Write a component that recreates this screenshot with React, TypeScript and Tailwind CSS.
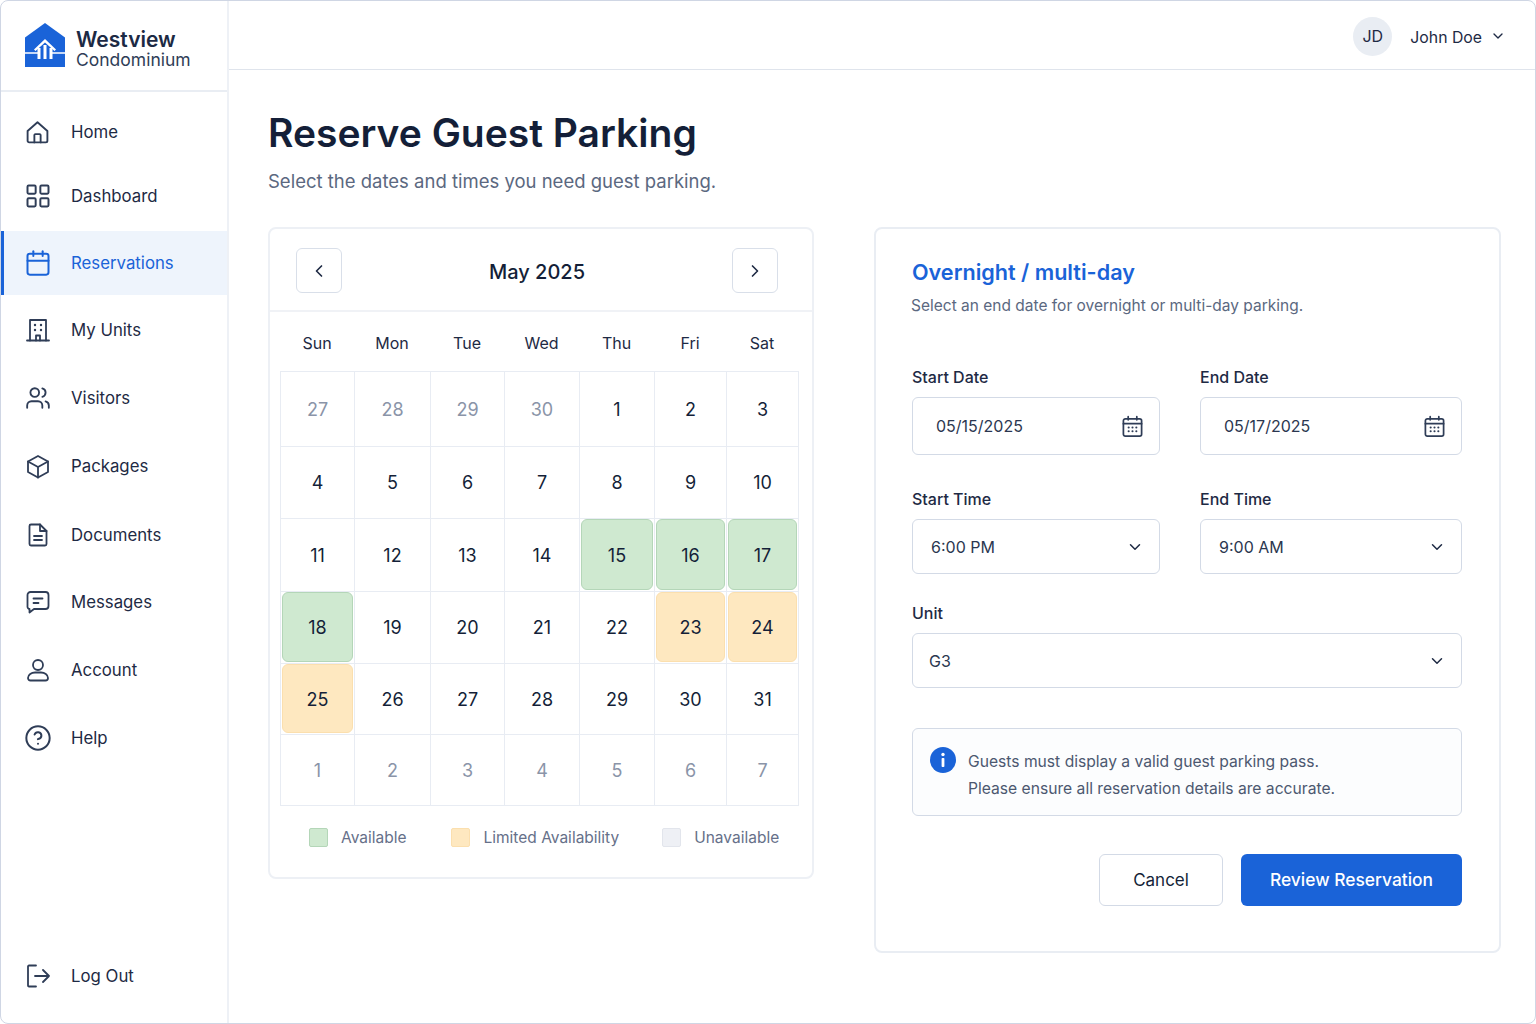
import React from 'react';
import { Calendar, ChevronDown, ChevronLeft, ChevronRight, CircleHelp, LayoutGrid, Users } from 'lucide-react';

type IconProps = { className?: string };

const Line = ({ className, children }: IconProps & { children: React.ReactNode }) => (
    <svg viewBox="0 0 24 24" fill="none" stroke="currentColor" strokeWidth={1.8} strokeLinecap="round" strokeLinejoin="round" className={className}>
        {children}
    </svg>
);

const HomeIcon = ({ className }: IconProps) => (
    <Line className={className}>
        <path d="M2.5 10.5 12 2.2l9.500 8.300V20a1.500 1.500 0 0 1-1.500 1.500H4A1.500 1.500 0 0 1 2.500 20z" />
        <path d="M9 21.500V14.500a1 1 0 0 1 1-1h4a1 1 0 0 1 1 1v7" />
    </Line>
);

const BuildingIcon = ({ className }: IconProps) => (
    <Line className={className}>
        <path d="M1 22.500h22" />
        <path d="M4 22.500V2h16v20.500" />
        <path d="M10 22.500v-5h4v5" />
        <path d="M9 7h.01M15 7h.01M9 12h.01M15 12h.01" strokeWidth={2.4} />
    </Line>
);

const PackageIcon = ({ className }: IconProps) => (
    <Line className={className}>
        <path d="M12 1.500 22 7v10.500L12 23 2 17.500V7z" />
        <path d="M2 7l10 5.500L22 7M12 12.500V23" />
    </Line>
);

const DocIcon = ({ className }: IconProps) => (
    <Line className={className}>
        <path d="M14 1.500H5a1.500 1.500 0 0 0-1.500 1.500v18A1.500 1.500 0 0 0 5 22.500h14a1.500 1.500 0 0 0 1.500-1.500V8z" />
        <path d="M14 1.500V8h6.500" />
        <path d="M8 13h8M8 17h8" />
    </Line>
);

const MessageIcon = ({ className }: IconProps) => (
    <Line className={className}>
        <path d="M4.500 2h15a3 3 0 0 1 3 3v11a3 3 0 0 1-3 3H8l-4.500 3.500V19A2.500 2.500 0 0 1 1.500 16V5a3 3 0 0 1 3-3z" />
        <path d="M7.500 8.500h9M7.500 13h5" />
    </Line>
);

const UserIcon = ({ className }: IconProps) => (
    <Line className={className}>
        <circle cx="12" cy="7" r="5" />
        <path d="M2 20c0-3.500 3.500-5.500 7-5.500h6c3.500 0 7 2 7 5.500 0 1.500-1 2.500-2.500 2.500h-15C3 22.500 2 21.500 2 20z" />
    </Line>
);

const LogOutIcon = ({ className }: IconProps) => (
    <Line className={className}>
        <path d="M10 1.500H3a1 1 0 0 0-1 1v19a1 1 0 0 0 1 1h7" />
        <path d="M9 12h14M17 6l6 6-6 6" />
    </Line>
);

const DateIcon = ({ className }: IconProps) => (
    <Line className={className}>
        <rect x="2.500" y="4" width="19" height="18" rx="2" />
        <path d="M2.500 9h19M7.500 1.800V5M16.500 1.800V5" />
        <path d="M8 13h.01M12 13h.01M16 13h.01M8 17h.01M12 17h.01M16 17h.01" strokeWidth={2.2} />
    </Line>
);

const Logo = () => (
    <svg viewBox="0 0 40 44" className="w-10 h-11 shrink-0 -mt-[2px]">
        <path d="M20 0 40 14.500V44H0V14.500z" fill="#1a63d8" />
        <path d="M0 30h13M27 30h13" stroke="#fff" strokeWidth={1.4} fill="none" />
        <path d="M20 16 31 26.500 29.500 28 20 19.500 10.500 28 9 26.500z" fill="#fff" />
        <rect x="12.500" y="25" width="3" height="11" fill="#fff" />
        <rect x="24.500" y="25" width="3" height="11" fill="#fff" />
        <rect x="18.500" y="22" width="3" height="14" fill="#fff" />
    </svg>
);

const navItems = [
    { label: 'Home', Icon: HomeIcon, iconClass: 'w-[25px] h-[25px]', space: 'mt-0' },
    { label: 'Dashboard', Icon: LayoutGrid, iconClass: 'w-[28px] h-[28px]', space: 'mt-0' },
    { label: 'Reservations', Icon: Calendar, iconClass: 'w-[28px] h-[28px]', space: 'mt-[3px]', active: true },
    { label: 'My Units', Icon: BuildingIcon, iconClass: 'w-[24px] h-[24px]', space: 'mt-[3px]' },
    { label: 'Visitors', Icon: Users, iconClass: 'w-[26px] h-[26px]', space: 'mt-[4px]' },
    { label: 'Packages', Icon: PackageIcon, iconClass: 'w-[24px] h-[25px]', space: 'mt-[4px]' },
    { label: 'Documents', Icon: DocIcon, iconClass: 'w-[24px] h-[24px]', space: 'mt-[5px]' },
    { label: 'Messages', Icon: MessageIcon, iconClass: 'w-[24px] h-[24px]', space: 'mt-[3px]' },
    { label: 'Account', Icon: UserIcon, iconClass: 'w-[24px] h-[24px]', space: 'mt-[4px]' },
    { label: 'Help', Icon: CircleHelp, iconClass: 'w-[28px] h-[28px]', space: 'mt-[4px]' },
];

function NavRow({ label, Icon, iconClass, space, active }: { label: string; Icon: React.ComponentType<any>; iconClass: string; space: string; active?: boolean }) {
    return (
        <div className={`${space} h-16 shrink-0 flex items-center ${active ? 'bg-[#eef4fc] border-l-[3px] border-[#1a63d8] text-[#1a63d8]' : 'pl-[3px] text-[#1e2a44]'}`}>
            <div className={`w-[67px] flex items-center justify-center ${active ? 'text-[#1a63d8]' : 'text-[#2f3d57]'}`}>
                <Icon className={`${iconClass} shrink-0`} strokeWidth={1.7} />
            </div>
            <span className="pt-[2px] text-[16.800px]">{label}</span>
        </div>
    );
}

function Sidebar() {
    return (
        <aside className="w-[228px] shrink-0 flex flex-col border-r-2 border-[#eef1f6]">
            <div className="h-[91px] shrink-0 border-b-2 border-[#e9edf3] flex items-center pl-6 gap-[11px]">
                <Logo />
                <div className="flex flex-col pt-[7px]">
                    <span className="text-[21px] leading-[22px] font-semibold text-[#1c2a44]">Westview</span>
                    <span className="text-[17.500px] leading-[18px] text-[#2f3d57]">Condominium</span>
                </div>
            </div>
            <nav className="flex-1 flex flex-col pt-2">
                {navItems.map((item) => (
                    <NavRow key={item.label} {...item} />
                ))}
                <div className="mt-auto mb-[15px]">
                    <NavRow label="Log Out" Icon={LogOutIcon} iconClass="w-[24px] h-[24px]" space="mt-0" />
                </div>
            </nav>
        </aside>
    );
}

const colWidths = 'grid-cols-[74px_76px_74px_75px_75px_72px_72px]';
const rowHeights = 'grid-rows-[75px_72px_73px_72px_71px_71px]';

type Day = { n: number; muted?: boolean; tone?: 'green' | 'amber' };

const days: Day[] = [
    { n: 27, muted: true }, { n: 28, muted: true }, { n: 29, muted: true }, { n: 30, muted: true }, { n: 1 }, { n: 2 }, { n: 3 },
    { n: 4 }, { n: 5 }, { n: 6 }, { n: 7 }, { n: 8 }, { n: 9 }, { n: 10 },
    { n: 11 }, { n: 12 }, { n: 13 }, { n: 14 }, { n: 15, tone: 'green' }, { n: 16, tone: 'green' }, { n: 17, tone: 'green' },
    { n: 18, tone: 'green' }, { n: 19 }, { n: 20 }, { n: 21 }, { n: 22 }, { n: 23, tone: 'amber' }, { n: 24, tone: 'amber' },
    { n: 25, tone: 'amber' }, { n: 26 }, { n: 27 }, { n: 28 }, { n: 29 }, { n: 30 }, { n: 31 },
    { n: 1, muted: true }, { n: 2, muted: true }, { n: 3, muted: true }, { n: 4, muted: true }, { n: 5, muted: true }, { n: 6, muted: true }, { n: 7, muted: true },
];

function DayCell({ day }: { day: Day }) {
    return (
        <div className="border-r border-b border-[#e8ecf3] flex items-center justify-center relative">
            {day.tone && (
                <div className={`absolute left-px top-0 right-px bottom-px rounded-[6px] border ${day.tone === 'green' ? 'bg-[#cfe9d0] border-[#b4d6b8]' : 'bg-[#fee8c0] border-[#fbdfae]'}`} />
            )}
            <span className={`relative text-[18px] ${day.muted ? 'text-[#8a94a8]' : 'text-[#141f38]'}`}>{day.n}</span>
        </div>
    );
}

function CalendarCard() {
    return (
        <section className="w-[546px] h-[652px] shrink-0 border-2 border-[#edf0f5] rounded-lg flex flex-col">
            <div className="h-[83px] shrink-0 pt-[2px] border-b-2 border-[#f0f2f6] flex items-center justify-between pl-[26px] pr-[34px]">
                <button className="w-[46px] h-[45px] border border-[#d9dfe9] rounded-md flex items-center justify-center text-[#1e2a44]">
                    <ChevronLeft className="w-5 h-5" strokeWidth={2} />
                </button>
                <span className="pt-[3px] text-[20px] font-medium text-[#141f38]">May 2025</span>
                <button className="w-[46px] h-[45px] border border-[#d9dfe9] rounded-md flex items-center justify-center text-[#1e2a44]">
                    <ChevronRight className="w-5 h-5" strokeWidth={2} />
                </button>
            </div>
            <div className={`ml-[10px] grid ${colWidths} h-[59px] pt-[2px] items-center text-center text-[16px] text-[#1e2a44]`}>
                {['Sun', 'Mon', 'Tue', 'Wed', 'Thu', 'Fri', 'Sat'].map((d) => (
                    <span key={d}>{d}</span>
                ))}
            </div>
            <div className={`ml-[10px] w-[519px] h-[435px] grid ${colWidths} ${rowHeights} border-t border-l border-[#e8ecf3]`}>
                {days.map((day, i) => (
                    <DayCell key={i} day={day} />
                ))}
            </div>
            <div className="flex items-center mt-[20px] pl-[39px] text-[15.500px] text-[#667089]">
                <span className="w-[19px] h-[19px] rounded-[2px] bg-[#cfe9d0] border border-[#b4d6b8]" />
                <span className="ml-[13px]">Available</span>
                <span className="ml-[45px] w-[19px] h-[19px] rounded-[2px] bg-[#fee8c0] border border-[#fbdfae]" />
                <span className="ml-[13px]">Limited Availability</span>
                <span className="ml-[43px] w-[19px] h-[19px] rounded-[2px] bg-[#eef0f5] border border-[#e2e5ec]" />
                <span className="ml-[13px]">Unavailable</span>
            </div>
        </section>
    );
}

function Field({ label, value, height, padding, icon }: { label: string; value: string; height: string; padding: string; icon: React.ReactNode }) {
    return (
        <div className="flex flex-col">
            <span className="mb-[10px] text-[16px] leading-5 font-medium text-[#1e2a44]">{label}</span>
            <div className={`${height} ${padding} border border-[#d3dae6] rounded-md flex items-center justify-between text-[16px] text-[#2b3750]`}>
                <span>{value}</span>
                {icon}
            </div>
        </div>
    );
}

function ReservationCard() {
    const dateIcon = <DateIcon className="w-[23px] h-[23px] text-[#2f3d57]" />;
    const chevron = <ChevronDown className="w-[18px] h-[18px] text-[#1e2a44]" strokeWidth={2} />;
    return (
        <section className="w-[627px] h-[726px] shrink-0 border-2 border-[#e9edf3] rounded-lg pt-[28px] pl-[36px]">
            <h2 className="text-[21.600px] leading-[30px] font-semibold text-[#1a63d8]">Overnight / multi-day</h2>
            <p className="mt-[7px] -ml-px text-[15.500px] leading-[24px] text-[#5b6880]">Select an end date for overnight or multi-day parking.</p>
            <div className="w-[550px] mt-[49px] grid grid-cols-[248px_262px] gap-x-10">
                <Field label="Start Date" value="05/15/2025" height="h-[58px]" padding="pl-[23px] pr-[15px]" icon={dateIcon} />
                <Field label="End Date" value="05/17/2025" height="h-[58px]" padding="pl-[23px] pr-[15px]" icon={dateIcon} />
                <div className="mt-[34px]">
                    <Field label="Start Time" value="6:00 PM" height="h-[55px]" padding="pl-[18px] pr-[15px]" icon={chevron} />
                </div>
                <div className="mt-[34px]">
                    <Field label="End Time" value="9:00 AM" height="h-[55px]" padding="pl-[18px] pr-[15px]" icon={chevron} />
                </div>
                <div className="col-span-2 mt-[29px]">
                    <Field label="Unit" value="G3" height="h-[55px]" padding="pl-[16px] pr-[15px]" icon={chevron} />
                </div>
            </div>
            <div className="w-[550px] h-[88px] mt-[40px] border border-[#d3dae6] rounded-md bg-[#fcfdfe] flex items-start pt-[18px] pl-[17px] text-[15.650px] leading-[27px] text-[#4c5870]">
                <svg viewBox="0 0 26 26" className="w-[26px] h-[26px] shrink-0">
                    <circle cx="13" cy="13" r="13" fill="#1a63d8" />
                    <circle cx="13" cy="7.500" r="1.700" fill="#fff" />
                    <rect x="11.600" y="11" width="2.800" height="9" rx="0.800" fill="#fff" />
                </svg>
                <p className="ml-[12px] mt-[1px]">
                    Guests must display a valid guest parking pass.
                    <br />
                    Please ensure all reservation details are accurate.
                </p>
            </div>
            <div className="w-[550px] mt-[38px] flex justify-end gap-[18px]">
                <button className="w-[124px] h-[52px] pt-[1px] border border-[#d3dae6] rounded-md text-[17px] text-[#141f38]">Cancel</button>
                <button className="w-[221px] h-[52px] pt-[1px] bg-[#1a63d8] rounded-md text-[17.400px] font-medium text-white">Review Reservation</button>
            </div>
        </section>
    );
}

export default function App() {
    return (
        <div className="w-[1536px] h-[1024px] bg-white overflow-hidden" style={{ fontFamily: "Inter, 'Noto Sans', sans-serif" }}>
            <div className="w-full h-full border border-[#cfd6e4] rounded-lg flex overflow-hidden">
                <Sidebar />
                <div className="flex-1 flex flex-col min-w-0">
                    <header className="h-[69px] shrink-0 pt-[2px] border-b border-[#dfe4ec] flex items-center justify-end pr-[29px]">
                        <div className="w-[39px] h-[39px] rounded-full bg-[#e9edf3] flex items-center justify-center text-[16px] text-[#1e2a44]">JD</div>
                        <span className="ml-[18px] pt-[3px] text-[15.800px] text-[#1e2a44]">John Doe</span>
                        <ChevronDown className="ml-[8px] w-[16px] h-[16px] text-[#1e2a44]" strokeWidth={2} />
                    </header>
                    <main className="flex-1 pl-[39px] pt-[37px]">
                        <h1 className="text-[39px] leading-[52px] font-semibold text-[#141f38]">Reserve Guest Parking</h1>
                        <p className="mt-[9px] text-[18.500px] leading-[26px] text-[#5b6880]">Select the dates and times you need guest parking.</p>
                        <div className="mt-[33px] flex items-start gap-[60px]">
                            <CalendarCard />
                            <ReservationCard />
                        </div>
                    </main>
                </div>
            </div>
        </div>
    );
}
